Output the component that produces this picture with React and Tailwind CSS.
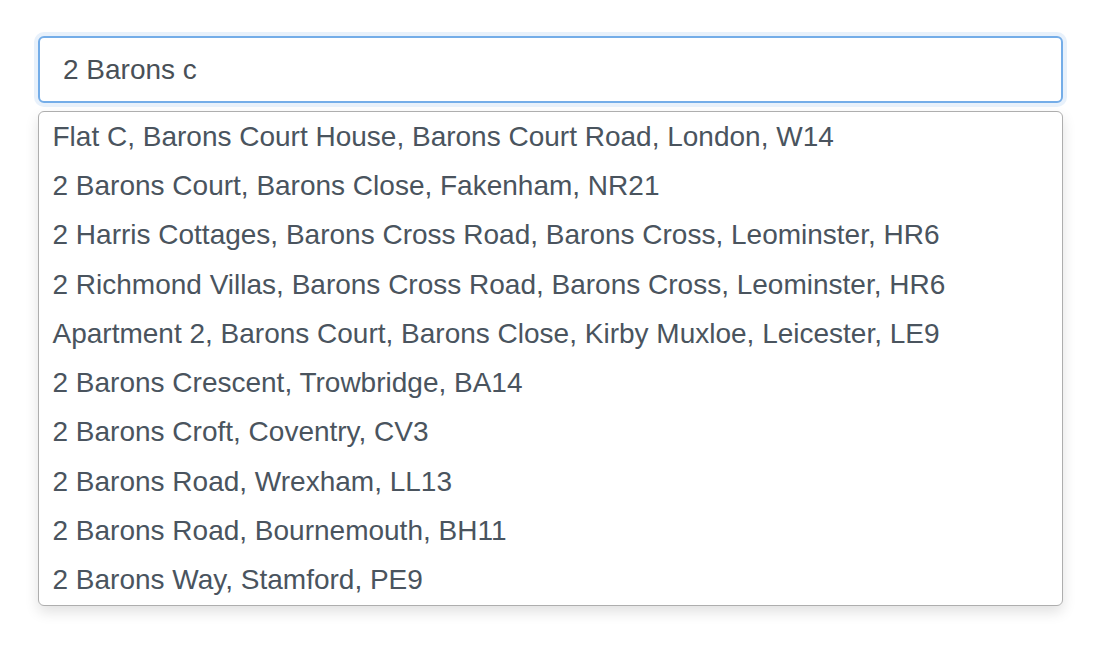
import React, { useState } from 'react';

const results = [
    'Flat C, Barons Court House, Barons Court Road, London, W14',
    '2 Barons Court, Barons Close, Fakenham, NR21',
    '2 Harris Cottages, Barons Cross Road, Barons Cross, Leominster, HR6',
    '2 Richmond Villas, Barons Cross Road, Barons Cross, Leominster, HR6',
    'Apartment 2, Barons Court, Barons Close, Kirby Muxloe, Leicester, LE9',
    '2 Barons Crescent, Trowbridge, BA14',
    '2 Barons Croft, Coventry, CV3',
    '2 Barons Road, Wrexham, LL13',
    '2 Barons Road, Bournemouth, BH11',
    '2 Barons Way, Stamford, PE9',
];

const App = () => {
    const [query, setQuery] = useState('2 Barons c');

    return (
        <div className="min-h-screen bg-white pt-[36px] px-[38px] font-['Liberation_Sans',Arial,sans-serif]">
            <div className="w-[1025px]">
                <input
                    type="text"
                    value={query}
                    onChange={(e) => setQuery(e.target.value)}
                    autoFocus
                    className="block w-full h-[67px] px-[23px] text-[28px] text-[#495057] bg-white border-2 border-[#74ade8] rounded-[6px] outline-none shadow-[0_0_0_4px_rgba(110,169,230,0.16)] caret-[#222]"
                />
                <ul className="mt-[8px] py-0 bg-white border-[1.5px] border-[#aeaeae] rounded-[6px] shadow-[0_6px_14px_rgba(0,0,0,0.12)]">
                    {results.map(item => (
                        <li key={item} className="h-[49.3px] flex items-center px-[13.5px] text-[28px] text-[#4a545e] whitespace-nowrap">
                            {item}
                        </li>
                    ))}
                </ul>
            </div>
        </div>
    );
};

export default App;
